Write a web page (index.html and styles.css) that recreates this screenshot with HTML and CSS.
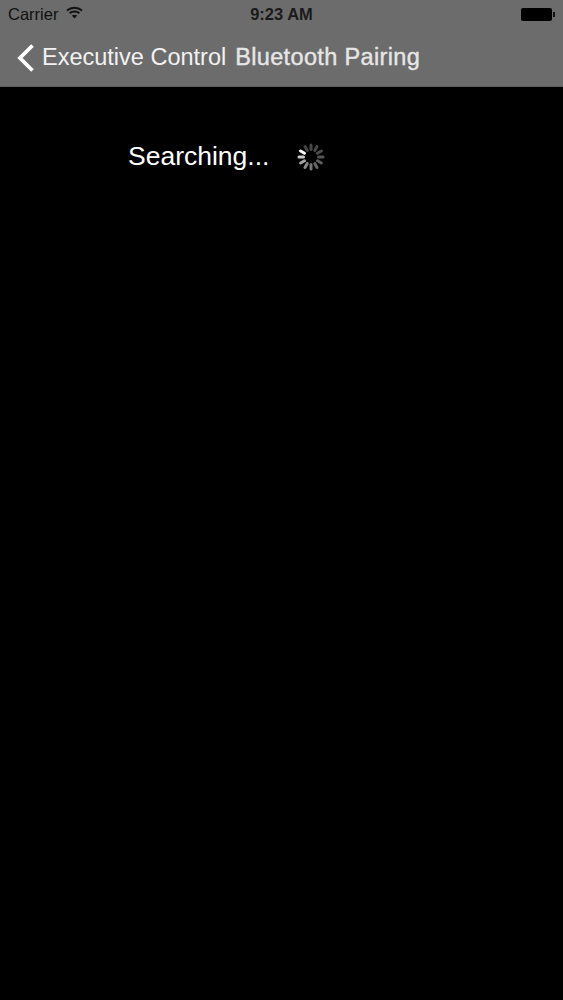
FILE: index.html
```html
<!DOCTYPE html>
<html lang="en">
  <head>
    <meta charset="UTF-8" />
    <meta name="viewport" content="width=device-width, initial-scale=1.0" />
    <title>Bluetooth Pairing</title>
    <link rel="stylesheet" href="styles.css">
  </head>

  <body>
    <div class="header">
      <!-- Status bar -->
      <div class="status-bar">
        <div class="status-left">
          <span class="carrier">Carrier</span>
          <svg class="wifi" width="17" height="13" viewBox="0 0 17 13">
            <path d="M1 4.6C5.2 0.9 11.8 0.9 16 4.6" fill="none" stroke="#111" stroke-width="2" />
            <path d="M3.6 7.3C6.4 5 10.6 5 13.4 7.3" fill="none" stroke="#111" stroke-width="2" />
            <path d="M5.8 9.6C7.5 8.3 9.5 8.3 11.2 9.6L8.5 12.6Z" fill="#111" />
          </svg>
        </div>
        <span class="clock">9:23 AM</span>
        <div class="battery">
          <div class="battery-body"></div>
          <div class="battery-tip"></div>
        </div>
      </div>

      <!-- Nav bar -->
      <div class="nav-bar">
        <svg class="back" width="20" height="30" viewBox="0 0 20 30">
          <path d="M17.5 2.5L5 15L17.5 27.5" fill="none" stroke="#fff" stroke-width="3.8" />
        </svg>
        <span class="back-label">Executive Control</span>
        <span class="nav-title">Bluetooth Pairing</span>
      </div>
    </div>

    <div class="content">
      <span class="searching">Searching...</span>
      <svg class="spinner" width="28" height="28" viewBox="-14 -14 28 28">
        <g stroke="#fff" stroke-width="3" stroke-linecap="round">
          <line x1="0" y1="-7.5" x2="0" y2="-12" opacity="0.27" />
          <line x1="0" y1="-7.5" x2="0" y2="-12" opacity="0.28" transform="rotate(30)" />
          <line x1="0" y1="-7.5" x2="0" y2="-12" opacity="0.3" transform="rotate(60)" />
          <line x1="0" y1="-7.5" x2="0" y2="-12" opacity="0.33" transform="rotate(90)" />
          <line x1="0" y1="-7.5" x2="0" y2="-12" opacity="0.36" transform="rotate(120)" />
          <line x1="0" y1="-7.5" x2="0" y2="-12" opacity="0.4" transform="rotate(150)" />
          <line x1="0" y1="-7.5" x2="0" y2="-12" opacity="0.46" transform="rotate(180)" />
          <line x1="0" y1="-7.5" x2="0" y2="-12" opacity="0.54" transform="rotate(210)" />
          <line x1="0" y1="-7.5" x2="0" y2="-12" opacity="0.64" transform="rotate(240)" />
          <line x1="0" y1="-7.5" x2="0" y2="-12" opacity="0.8" transform="rotate(270)" />
          <line x1="0" y1="-7.5" x2="0" y2="-12" opacity="1" transform="rotate(300)" />
          <line x1="0" y1="-7.5" x2="0" y2="-12" opacity="0.26" transform="rotate(330)" />
        </g>
      </svg>
    </div>
  </body>
</html>
```

FILE: styles.css
```css
* {
  margin: 0;
  padding: 0;
  box-sizing: border-box;
  font-family: "Liberation Sans", Arial, sans-serif;
}

body {
  background-color: #000;
  min-height: 100vh;
}

.header {
  height: 87px;
  background-color: #6c6c6c;
  border-bottom: 1px solid #5c5c5c;
}

.status-bar {
  display: flex;
  justify-content: space-between;
  align-items: center;
  height: 29px;
  padding: 0 8px;
  color: #111;
  font-size: 16.5px;
}

.status-left {
  display: flex;
  align-items: center;
  gap: 8px;
  width: 160px;
}

.wifi {
  margin-top: -4px;
}

.clock {
  font-weight: bold;
  color: #1a1a1a;
}

.battery {
  display: flex;
  align-items: center;
  justify-content: flex-end;
  width: 160px;
}

.battery-body {
  width: 31px;
  height: 13px;
  background-color: #000;
  border-radius: 2px;
}

.battery-tip {
  width: 2px;
  height: 5px;
  margin-left: 1px;
  background-color: #111;
}

.nav-bar {
  display: flex;
  align-items: center;
  height: 57px;
  padding-left: 15px;
  color: #f2f2f2;
  font-size: 23.5px;
}

.back {
  margin-right: 7px;
}

.back-label {
  margin-right: 9px;
}

.nav-title {
  color: #e6e6e6;
  letter-spacing: 0.35px;
  -webkit-text-stroke: 0.4px #e6e6e6;
}

.content {
  display: flex;
  align-items: center;
  padding: 54px 0 0 128px;
  color: #fff;
}

.searching {
  font-size: 26.5px;
  margin-right: 28px;
}
```
